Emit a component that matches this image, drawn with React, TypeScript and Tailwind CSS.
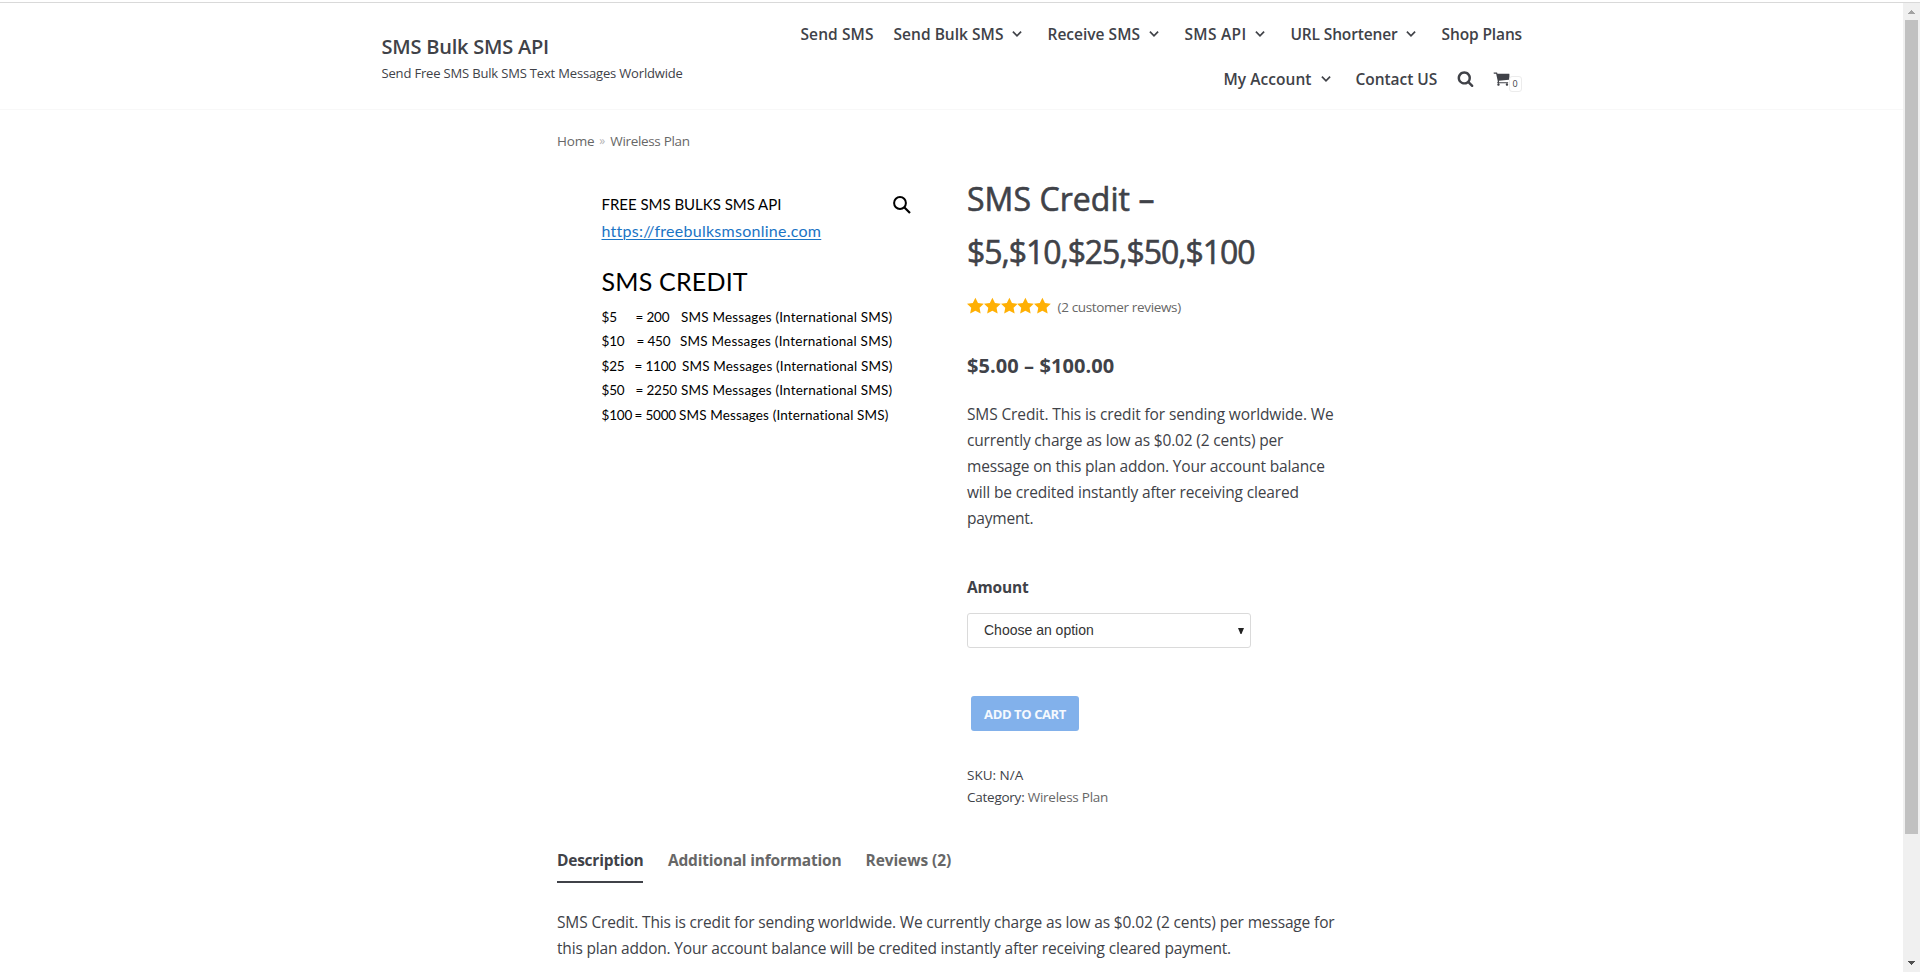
import type { ReactNode } from "react";

function Chevron() {
  return (
    <svg width="10" height="6" viewBox="0 0 10 6" className="ml-[9px] shrink-0" fill="none" stroke="#404248" strokeWidth="1.7">
      <path d="M0.9 0.7 5 4.8 9.1 0.7" />
    </svg>
  );
}

function NavItem({ className, text, tracking, menu }: { className: string; text: string; tracking: string; menu?: boolean }) {
  return (
    <li className={`flex h-full shrink-0 items-center whitespace-nowrap ${className}`}>
      <a className={tracking}>{text}</a>
      {menu && <Chevron />}
    </li>
  );
}

function Line({ className, children }: { className: string; children: ReactNode }) {
  return <span className={`block whitespace-nowrap ${className}`}>{children}</span>;
}

const credits = [
  { price: "$5", pw: "w-[34px]", amount: "= 200", aw: "w-[45.5px]", ls: "tracking-[0.2px]" },
  { price: "$10", pw: "w-[35px]", amount: "= 450", aw: "w-[43.5px]", ls: "tracking-[0.23px]" },
  { price: "$25", pw: "w-[33px]", amount: "= 1100", aw: "w-[47.5px]", ls: "tracking-[0.17px]" },
  { price: "$50", pw: "w-[34px]", amount: "= 2250", aw: "w-[45.5px]", ls: "tracking-[0.2px]" },
  { price: "$100", pw: "w-[33px]", amount: "= 5000", aw: "w-[44.5px]", ls: "tracking-[0.14px]" },
];

function Header() {
  return (
    <header className="h-[107px] border-b border-[#f8f8f8] bg-white">
      <div className="mx-auto flex w-[1140px] justify-between">
        <div className="pt-[32px] text-[#404248]">
          <p className="whitespace-nowrap text-[20px] leading-[24px] font-semibold tracking-[-0.22px]">SMS Bulk SMS API</p>
          <p className="mt-[4px] whitespace-nowrap text-[13px] leading-[20px] tracking-[-0.17px]">
            Send Free SMS Bulk SMS Text Messages Worldwide
          </p>
        </div>
        <nav className="pt-[8px] text-[15.5px] leading-[24px] font-semibold text-[#404248]">
          <ul className="flex h-[45px] justify-end">
            <NavItem className="w-[93px]" text="Send SMS" tracking="tracking-[0.1px]" />
            <NavItem className="w-[154px]" text="Send Bulk SMS" tracking="tracking-[0.03px]" menu />
            <NavItem className="w-[137px]" text="Receive SMS" tracking="tracking-[0.01px]" menu />
            <NavItem className="w-[106px]" text="SMS API" tracking="tracking-[0.3px]" menu />
            <NavItem className="w-[151px]" text="URL Shortener" tracking="tracking-[-0.15px]" menu />
            <NavItem className="w-[80px]" text="Shop Plans" tracking="tracking-[-0.12px]" />
          </ul>
          <ul className="flex h-[45px] justify-end">
            <NavItem className="w-[132px]" text="My Account" tracking="tracking-[0.05px]" menu />
            <NavItem className="w-[101px]" text="Contact US" tracking="tracking-[-0.05px]" />
            <li className="flex w-[36px] items-center">
              <svg width="17" height="17" viewBox="0 0 1792 1792" fill="#404248">
                <path d="M1216 832q0-185-131.5-316.5t-316.5-131.5-316.5 131.5-131.5 316.5 131.5 316.5 316.5 131.5 316.5-131.5 131.5-316.5zm512 832q0 52-38 90t-90 38q-54 0-90-38l-343-342q-179 124-399 124-143 0-273.5-55.5t-225-150-150-225-55.5-273.5 55.5-273.5 150-225 225-150 273.5-55.5 273.5 55.5 225 150 150 225 55.5 273.5q0 220-124 399l343 343q37 37 37 90z" />
              </svg>
            </li>
            <li className="flex w-[29px] items-center">
              <svg width="17" height="17" viewBox="0 0 1792 1792" fill="#404248" className="shrink-0">
                <path d="M704 1536q0 52-38 90t-90 38-90-38-38-90 38-90 90-38 90 38 38 90zm896 0q0 52-38 90t-90 38-90-38-38-90 38-90 90-38 90 38 38 90zm128-1088v512q0 24-16.5 42.5t-40.5 21.5l-1044 122q13 60 13 70 0 16-24 64h920q26 0 45 19t19 45-19 45-45 19h-1024q-26 0-45-19t-19-45q0-11 8-31.5t16-36 21.5-40 15.5-29.5l-177-823h-204q-26 0-45-19t-19-45 19-45 45-19h256q16 0 28.5 6.5t19.5 15.5 13 24.5 8 26 5.5 29.5 4.5 26h1201q26 0 45 19t19 45z" />
              </svg>
              <span className="mt-[10px] -ml-px flex h-[16px] w-[13px] shrink-0 items-center justify-center rounded-[3px] border border-[#ececec] text-[9px] font-normal">
                0
              </span>
            </li>
          </ul>
        </nav>
      </div>
    </header>
  );
}

function Gallery() {
  return (
    <div className="flex w-[410px] shrink-0 pt-[39px] pl-[44.5px] font-[Lato,sans-serif] text-black">
      <div className="w-[291px] whitespace-nowrap">
        <Line className="text-[15px] leading-[28px] tracking-[-0.02px]">FREE SMS BULKS SMS API</Line>
        <Line className="-mt-px text-[16px] leading-[28px] tracking-[0.26px] text-[#1b74c5] underline decoration-1 underline-offset-2">
          https://freebulksmsonline.com
        </Line>
        <Line className="mt-[19.5px] text-[25px] leading-[32px] tracking-[0.2px]">SMS CREDIT</Line>
        <div className="mt-[8px] text-[13.5px] leading-[24.5px]">
          {credits.map((c) => (
            <div key={c.price} className="flex">
              <span className={`tracking-[-0.2px] ${c.pw}`}>{c.price}</span>
              <span className={`tracking-[-0.2px] ${c.aw}`}>{c.amount}</span>
              <span className={c.ls}>SMS Messages (International SMS)</span>
            </div>
          ))}
        </div>
      </div>
      <svg width="18" height="18" viewBox="0 0 18 18" fill="none" stroke="#000" className="mt-[6px]">
        <circle cx="7" cy="7" r="5.9" strokeWidth="2" />
        <path d="M11.2 11.2 17 17" strokeWidth="2.2" />
      </svg>
    </div>
  );
}

function Summary() {
  return (
    <div className="text-[#404248]">
      <h1 className="mt-[22px] text-[32px] leading-[52px] font-normal [-webkit-text-stroke:0.6px_#404248]">
        <Line className="tracking-[0.06px]">SMS Credit –</Line>
        <Line className="pt-px tracking-[-1.06px]">$5,$10,$25,$50,$100</Line>
      </h1>
      <div className="mt-[19px] flex h-[20px] items-center">
        <div className="-mt-[3px] flex">
          {[0, 1, 2, 3, 4].map((i) => (
            <svg key={i} width="16.8" height="17" viewBox="0 0 17 17" fill="#ffb004">
              <path d="M8.5 0.6 11.1 6 17 6.8 12.7 10.7 13.8 16.6 8.5 13.8 3.2 16.6 4.3 10.7 0 6.8 5.9 6Z" />
            </svg>
          ))}
        </div>
        <span className="ml-[6.5px] text-[13.5px] leading-[20px] tracking-[-0.34px] whitespace-nowrap text-[#676767]">(2 customer reviews)</span>
      </div>
      <p className="mt-[34px] text-[20px] leading-[30px] font-bold tracking-[0.08px] whitespace-nowrap">$5.00 – $100.00</p>
      <p className="mt-[19.5px] text-[15.5px] leading-[26px]">
        <Line className="tracking-[-0.125px]">SMS Credit. This is credit for sending worldwide. We</Line>
        <Line className="tracking-[-0.17px]">currently charge as low as $0.02 (2 cents) per</Line>
        <Line className="tracking-[-0.178px]">message on this plan addon. Your account balance</Line>
        <Line className="tracking-[-0.155px]">will be credited instantly after receiving cleared</Line>
        <Line className="tracking-[-0.2px]">payment.</Line>
      </p>
      <p className="mt-[43.5px] text-[15.5px] leading-[26px] font-bold tracking-[-0.2px]">Amount</p>
      <div className="mt-[13px] flex h-[35px] w-[284px] items-center justify-between rounded-[3px] border border-[#dadada] bg-white pr-[6px] pl-[16px] font-['Liberation_Sans',sans-serif] text-[14px] text-[#333]">
        <span>Choose an option</span>
        <svg width="6" height="6" viewBox="0 0 6 6" fill="#222">
          <path d="M0 0H6L3.5 6H2.5Z" />
        </svg>
      </div>
      <button className="mt-[48px] ml-[4px] flex h-[35px] w-[108px] items-center justify-center rounded-[3px] bg-[#82b1eb] text-[13px] leading-[20px] font-bold tracking-[-0.4px] whitespace-nowrap text-[#f5f9fe]">
        ADD TO CART
      </button>
      <div className="mt-[33px] text-[13.5px] leading-[22px]">
        <Line className="tracking-[0px]">SKU: N/A</Line>
        <Line className="tracking-[-0.25px]">
          Category: <a className="text-[#676767]">Wireless Plan</a>
        </Line>
      </div>
    </div>
  );
}

function Tabs() {
  return (
    <section className="mt-[42px]">
      <ul className="flex text-[15.5px] leading-[20px] font-bold whitespace-nowrap text-[#676767]">
        <li className="w-[86px] border-b-2 border-[#404248] pb-[11px] tracking-[-0.24px] text-[#404248]">Description</li>
        <li className="ml-[25px] w-[173px] tracking-[-0.2px]">Additional information</li>
        <li className="ml-[24.5px] tracking-[-0.08px]">Reviews (2)</li>
      </ul>
      <p className="mt-[25.5px] text-[15.5px] leading-[26px] text-[#404248]">
        <Line className="tracking-[-0.145px]">
          SMS Credit. This is credit for sending worldwide. We currently charge as low as $0.02 (2 cents) per message for
        </Line>
        <Line className="tracking-[-0.18px]">
          this plan addon. Your account balance will be credited instantly after receiving cleared payment.
        </Line>
      </p>
    </section>
  );
}

function Scrollbar() {
  return (
    <aside className="flex w-[17px] shrink-0 flex-col items-center bg-[#f0f0f0]">
      <svg width="7" height="4" viewBox="0 0 7 4" fill="#a3a3a3" className="mt-[7px] shrink-0">
        <path d="M3 0H4V1H5V2H6V3H7V4H0V3H1V2H2V1H3Z" />
      </svg>
      <div className="mt-[6px] h-[814px] w-[13px] shrink-0 bg-[#c1c1c1]" />
      <svg width="7" height="4" viewBox="0 0 7 4" fill="#505050" className="mt-auto mb-[7px] shrink-0">
        <path d="M0 0H7V1H6V2H5V3H4V4H3V3H2V2H1V1H0Z" />
      </svg>
    </aside>
  );
}

export default function App() {
  return (
    <div className="flex h-[972px] flex-col overflow-hidden bg-white pt-[2px] font-['Open_Sans',sans-serif]">
      <div className="h-px shrink-0 bg-[#d9d9d9]" />
      <div className="flex min-h-0 flex-1">
        <div className="min-w-0 flex-1 overflow-hidden">
          <Header />
          <main className="mx-auto w-[789px] pt-[21px]">
            <div className="flex gap-[5px] text-[13.5px] leading-[20px] whitespace-nowrap text-[#676767]">
              <a className="tracking-[-0.2px]">Home</a>
              <span className="w-[6px] text-[12px] text-[#b5b5b5]">»</span>
              <a className="tracking-[-0.34px]">Wireless Plan</a>
            </div>
            <div className="flex">
              <Gallery />
              <Summary />
            </div>
            <Tabs />
          </main>
        </div>
        <Scrollbar />
      </div>
    </div>
  );
}
